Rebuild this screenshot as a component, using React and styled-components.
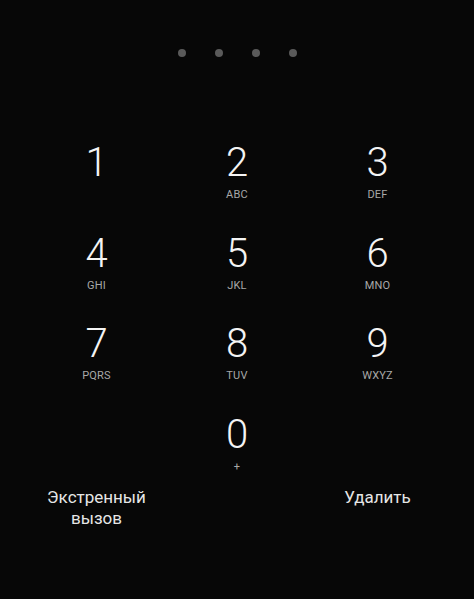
import React from "react";
import styled, { createGlobalStyle } from "styled-components";

const keys = [
  { d: "1", l: "" },
  { d: "2", l: "ABC" },
  { d: "3", l: "DEF" },
  { d: "4", l: "GHI" },
  { d: "5", l: "JKL" },
  { d: "6", l: "MNO" },
  { d: "7", l: "PQRS" },
  { d: "8", l: "TUV" },
  { d: "9", l: "WXYZ" },
];

function App() {
  return (
    <Screen>
      <GlobalStyle />
      <Dots>
        {[0, 1, 2, 3].map((i) => (
          <Dot key={i} />
        ))}
      </Dots>
      <Pad>
        {keys.map((k) => (
          <Key key={k.d}>
            <Digit>{k.d}</Digit>
            <Letters>{k.l}</Letters>
          </Key>
        ))}
        <span />
        <Key>
          <Digit>0</Digit>
          <Letters>+</Letters>
        </Key>
        <span />
      </Pad>
      <Footer>
        <Action>
          Экстренный
          <br />
          вызов
        </Action>
        <span />
        <Action>Удалить</Action>
      </Footer>
    </Screen>
  );
}

const GlobalStyle = createGlobalStyle`
  html, body {
    margin: 0;
    padding: 0;
    background: #070707;
  }
`;

const Screen = styled.div`
  width: 474px;
  height: 599px;
  background: #070707;
  color: #fff;
  font-family: "Roboto", "Noto Sans", sans-serif;
  overflow: hidden;
  padding-top: 49px;
  box-sizing: border-box;
`;

const Dots = styled.div`
  display: flex;
  justify-content: center;
  gap: 29px;
  height: 8px;
`;

const Dot = styled.span`
  width: 8px;
  height: 8px;
  border-radius: 50%;
  background: #5a5a5a;
`;

const Pad = styled.div`
  display: grid;
  grid-template-columns: repeat(3, 140.5px);
  grid-template-rows: repeat(3, 90.67px) 74px;
  justify-content: center;
  margin-top: 84px;
`;

const Footer = styled.div`
  display: grid;
  grid-template-columns: repeat(3, 140.5px);
  justify-content: center;
`;

const Key = styled.div`
  display: flex;
  flex-direction: column;
  align-items: center;
`;

const Digit = styled.div`
  font-size: 40px;
  font-weight: 300;
  line-height: 44px;
  color: #f4f4f4;
`;

const Letters = styled.div`
  font-size: 11px;
  line-height: 14px;
  height: 14px;
  margin-top: 3px;
  color: #a8a8a8;
  letter-spacing: 0.2px;
`;

const Action = styled.div`
  text-align: center;
  font-size: 17px;
  line-height: 21px;
  color: #e6e6e6;
`;

export default App;
